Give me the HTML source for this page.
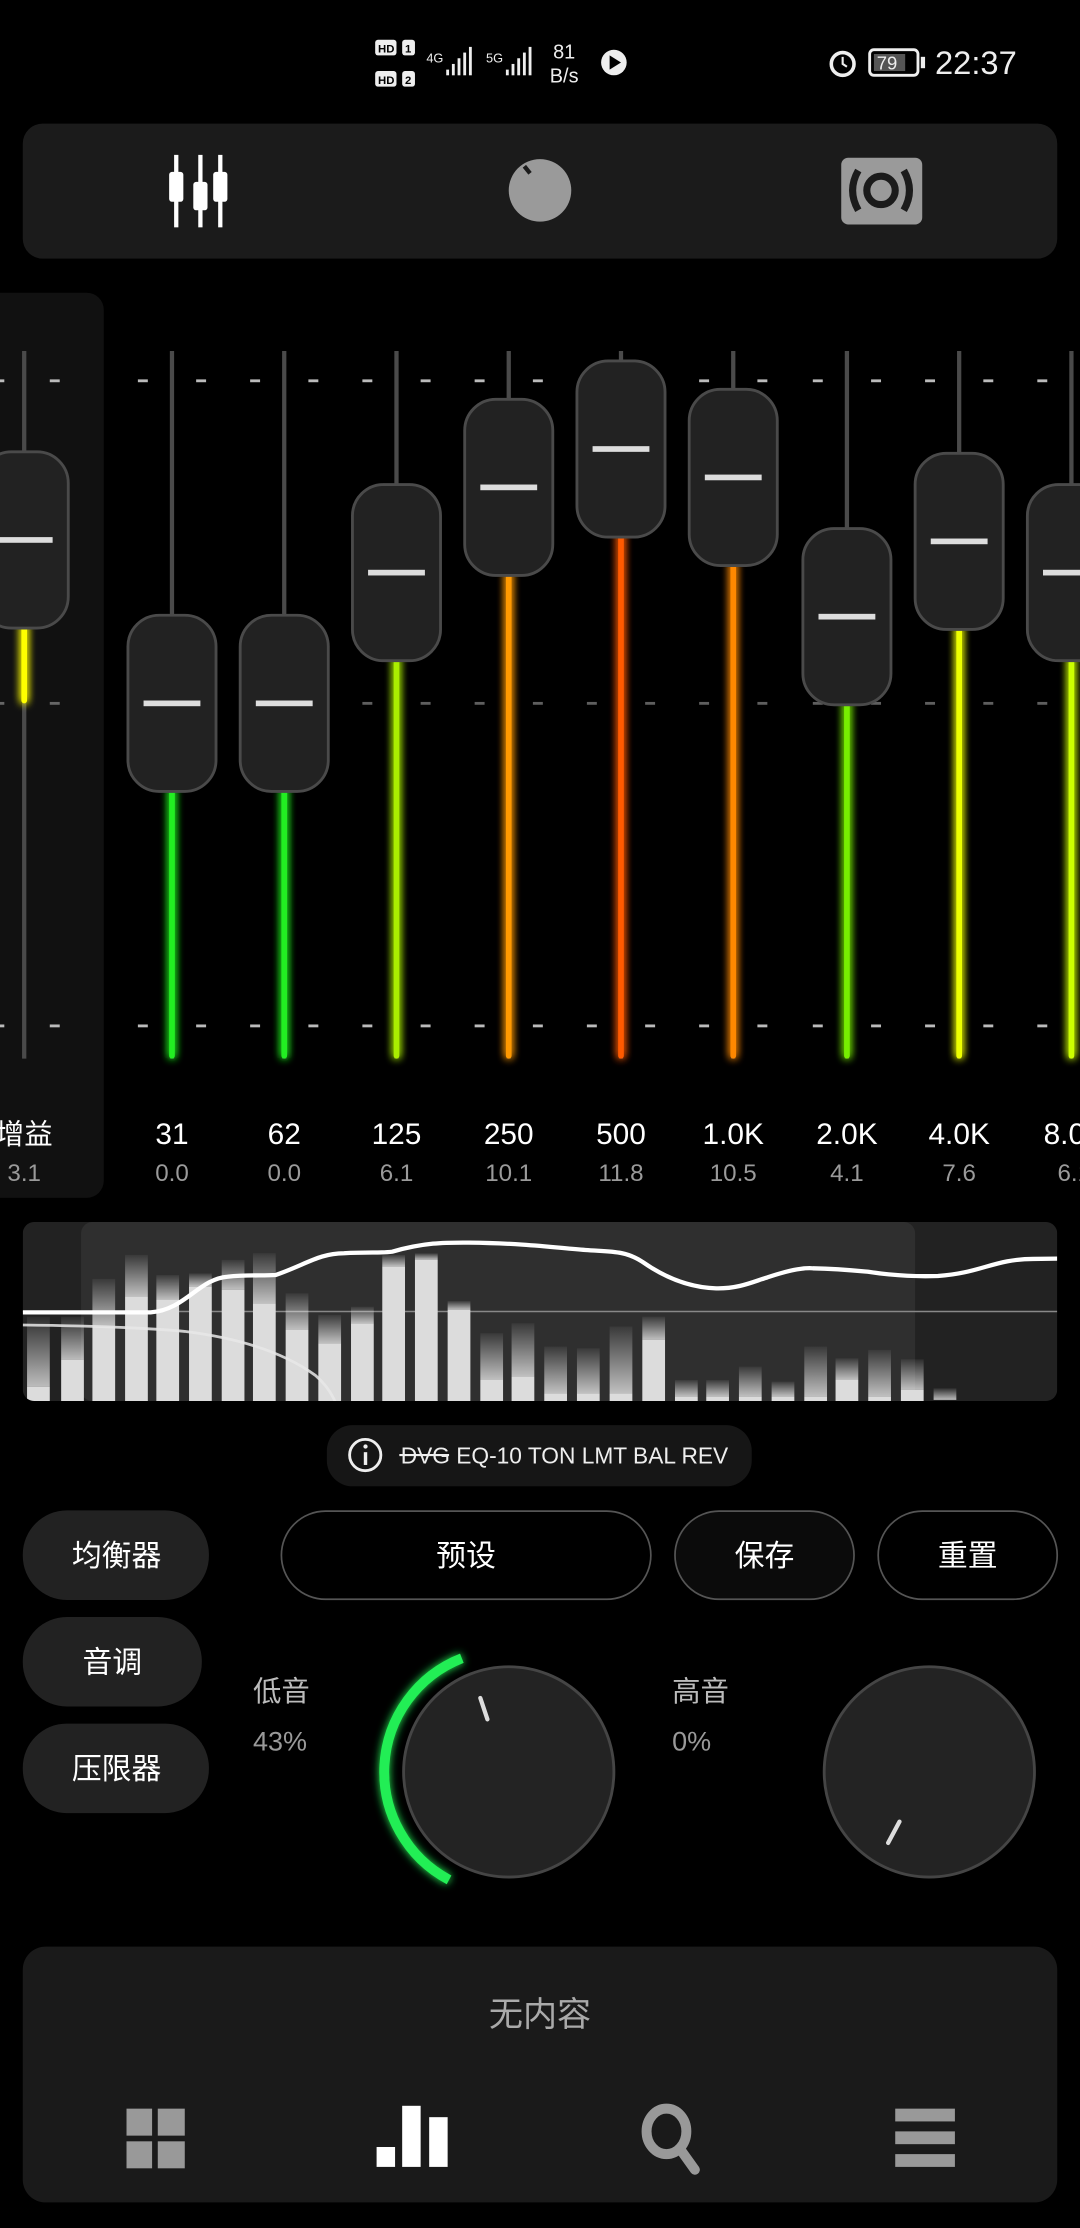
<!DOCTYPE html>
<html><head><meta charset="utf-8">
<style>
html,body{margin:0;padding:0;background:#000;width:1080px;height:2228px;overflow:hidden}
svg{display:block}
text{font-family:"Liberation Sans Narrow","Liberation Sans","Noto Sans CJK SC",sans-serif}
.cjk{font-family:"Liberation Sans","Noto Sans CJK SC",sans-serif}
</style></head><body>
<svg width="1080" height="2228" viewBox="0 0 760 1568" xmlns="http://www.w3.org/2000/svg">
<defs>
<filter id="glow" x="-200%" y="-10%" width="500%" height="120%"><feGaussianBlur stdDeviation="3" result="b"/><feMerge><feMergeNode in="b"/><feMergeNode in="b"/><feMergeNode in="SourceGraphic"/></feMerge></filter>
<filter id="glow2" x="-50%" y="-50%" width="200%" height="200%"><feGaussianBlur stdDeviation="3" result="b"/><feMerge><feMergeNode in="b"/><feMergeNode in="SourceGraphic"/></feMerge></filter>
<linearGradient id="fade" x1="0" y1="0" x2="0" y2="1"><stop offset="0" stop-color="#fff" stop-opacity="0.05"/><stop offset="1" stop-color="#fff" stop-opacity="0.7"/></linearGradient>
<clipPath id="spec"><rect x="16" y="860" width="728" height="126" rx="8"/></clipPath>
</defs>
<rect width="760" height="1568" fill="#000"/>

<!-- status bar -->
<g fill="#eee">
<rect x="264" y="28" width="15" height="11" rx="2"/><rect x="283" y="28" width="9" height="11" rx="2"/>
<rect x="264" y="50" width="15" height="11" rx="2"/><rect x="283" y="50" width="9" height="11" rx="2"/>
<text x="266" y="37" font-size="8" fill="#000" font-weight="bold">HD</text><text x="285" y="37" font-size="8" fill="#000" font-weight="bold">1</text>
<text x="266" y="59" font-size="8" fill="#000" font-weight="bold">HD</text><text x="285" y="59" font-size="8" fill="#000" font-weight="bold">2</text>
<text x="300" y="44" font-size="9">4G</text>
<rect x="314" y="49" width="2" height="4"/><rect x="318" y="45" width="2" height="8"/><rect x="322" y="41" width="2" height="12"/><rect x="326" y="37" width="2" height="16"/><rect x="330" y="33" width="2" height="20"/>
<text x="342" y="44" font-size="9">5G</text>
<rect x="356" y="49" width="2" height="4"/><rect x="360" y="45" width="2" height="8"/><rect x="364" y="41" width="2" height="12"/><rect x="368" y="37" width="2" height="16"/><rect x="372" y="33" width="2" height="20"/>
<text x="397" y="41" font-size="14" text-anchor="middle">81</text>
<text x="397" y="58" font-size="14" text-anchor="middle">B/s</text>
<circle cx="432" cy="44" r="9"/><path d="M429 39 L437 44 L429 49Z" fill="#000"/>
<circle cx="593" cy="45" r="8" fill="none" stroke="#eee" stroke-width="2.5"/><path d="M593 40 V45 L596 47" stroke="#eee" stroke-width="1.5" fill="none"/>
<rect x="612" y="35" width="34" height="18" rx="3" fill="none" stroke="#eee" stroke-width="2"/><rect x="615" y="38" width="22" height="12" fill="#555"/><rect x="648" y="40" width="3" height="8"/>
<text x="617" y="49" font-size="13">79</text>
<text x="658" y="52" font-size="23">22:37</text>
</g>

<!-- top tabs -->
<rect x="16" y="87" width="728" height="95" rx="14" fill="#1b1b1b"/>
<g fill="#fff">
<rect x="122.5" y="109" width="3" height="51"/><rect x="139.5" y="109" width="3" height="51"/><rect x="153.5" y="109" width="3" height="51"/>
<rect x="119" y="121" width="10" height="21" rx="2"/><rect x="136" y="128" width="10" height="20" rx="2"/><rect x="150" y="121" width="10" height="21" rx="2"/>
</g>
<ellipse cx="380" cy="134" rx="22" ry="22" fill="#9a9a9a"/>
<path d="M369 117 L373 122" stroke="#1b1b1b" stroke-width="3"/>
<rect x="592" y="111" width="57" height="47" rx="5" fill="#9a9a9a"/>
<circle cx="620" cy="134" r="10" fill="none" stroke="#1b1b1b" stroke-width="5"/>
<path d="M604 120 Q596 134 604 148 M636 120 Q644 134 636 148" stroke="#1b1b1b" stroke-width="5" fill="none"/>

<!-- gain panel -->
<rect x="-20" y="206" width="93" height="637" rx="12" fill="#111"/>

<!-- dashes -->
<g fill="#bbb">
<g id="dr">
<rect x="-4" y="267" width="7" height="2"/><rect x="35" y="267" width="7" height="2"/>
<rect x="97" y="267" width="7" height="2"/><rect x="138" y="267" width="7" height="2"/><rect x="176" y="267" width="7" height="2"/><rect x="217" y="267" width="7" height="2"/>
<rect x="255" y="267" width="7" height="2"/><rect x="296" y="267" width="7" height="2"/><rect x="334" y="267" width="7" height="2"/><rect x="375" y="267" width="7" height="2"/>
<rect x="413" y="267" width="7" height="2"/><rect x="454" y="267" width="7" height="2"/><rect x="492" y="267" width="7" height="2"/><rect x="533" y="267" width="7" height="2"/>
<rect x="572" y="267" width="7" height="2"/><rect x="613" y="267" width="7" height="2"/><rect x="651" y="267" width="7" height="2"/><rect x="692" y="267" width="7" height="2"/>
<rect x="730" y="267" width="7" height="2"/>
</g>
<use href="#dr" y="227" opacity="0.5"/>
<use href="#dr" y="454"/>
</g>

<!-- sliders -->
<g stroke="#4a4a4a" stroke-width="3">
<line x1="17" y1="247" x2="17" y2="745"/><line x1="121" y1="247" x2="121" y2="745"/><line x1="200" y1="247" x2="200" y2="745"/><line x1="279" y1="247" x2="279" y2="745"/><line x1="358" y1="247" x2="358" y2="745"/><line x1="437" y1="247" x2="437" y2="745"/><line x1="516" y1="247" x2="516" y2="745"/><line x1="596" y1="247" x2="596" y2="745"/><line x1="675" y1="247" x2="675" y2="745"/><line x1="754" y1="247" x2="754" y2="745"/>
</g>
<g stroke-width="4" stroke-linecap="round" filter="url(#glow)">
<line x1="17" y1="440" x2="17" y2="493" stroke="#ffff00"/>
<line x1="121" y1="555" x2="121" y2="743" stroke="#22ee22"/>
<line x1="200" y1="555" x2="200" y2="743" stroke="#22ee22"/>
<line x1="279" y1="463" x2="279" y2="743" stroke="#aaee00"/>
<line x1="358" y1="403" x2="358" y2="743" stroke="#ff9900"/>
<line x1="437" y1="376" x2="437" y2="743" stroke="#ff5a00"/>
<line x1="516" y1="396" x2="516" y2="743" stroke="#ff8800"/>
<line x1="596" y1="494" x2="596" y2="743" stroke="#77ee00"/>
<line x1="675" y1="441" x2="675" y2="743" stroke="#eeff00"/>
<line x1="754" y1="463" x2="754" y2="743" stroke="#ccff00"/>
</g>
<g fill="#222" stroke="#4a4a4a" stroke-width="2">
<rect x="-14" y="318" width="62" height="124" rx="22"/>
<rect x="90" y="433" width="62" height="124" rx="22"/>
<rect x="169" y="433" width="62" height="124" rx="22"/>
<rect x="248" y="341" width="62" height="124" rx="22"/>
<rect x="327" y="281" width="62" height="124" rx="22"/>
<rect x="406" y="254" width="62" height="124" rx="22"/>
<rect x="485" y="274" width="62" height="124" rx="22"/>
<rect x="565" y="372" width="62" height="124" rx="22"/>
<rect x="644" y="319" width="62" height="124" rx="22"/>
<rect x="723" y="341" width="62" height="124" rx="22"/>
</g>
<g fill="#ddd">
<rect x="-3" y="378" width="40" height="4"/><rect x="101" y="493" width="40" height="4"/><rect x="180" y="493" width="40" height="4"/><rect x="259" y="401" width="40" height="4"/><rect x="338" y="341" width="40" height="4"/><rect x="417" y="314" width="40" height="4"/><rect x="496" y="334" width="40" height="4"/><rect x="576" y="432" width="40" height="4"/><rect x="655" y="379" width="40" height="4"/><rect x="734" y="401" width="40" height="4"/>
</g>

<!-- labels -->
<g font-size="21" fill="#fff" text-anchor="middle">
<text x="17" y="805" class="cjk" font-size="20">增益</text>
<text x="121" y="805">31</text><text x="200" y="805">62</text><text x="279" y="805">125</text><text x="358" y="805">250</text><text x="437" y="805">500</text><text x="516" y="805">1.0K</text><text x="596" y="805">2.0K</text><text x="675" y="805">4.0K</text><text x="756" y="805">8.0K</text>
</g>
<g font-size="17" fill="#9a9a9a" text-anchor="middle">
<text x="17" y="831">3.1</text>
<text x="121" y="831">0.0</text><text x="200" y="831">0.0</text><text x="279" y="831">6.1</text><text x="358" y="831">10.1</text><text x="437" y="831">11.8</text><text x="516" y="831">10.5</text><text x="596" y="831">4.1</text><text x="675" y="831">7.6</text><text x="756" y="831">6.1</text>
</g>

<!-- spectrum -->
<g clip-path="url(#spec)">
<rect x="16" y="860" width="728" height="126" fill="#222"/>
<rect x="57" y="860" width="587" height="126" rx="8" fill="#2f2f2f"/>
<line x1="16" y1="923" x2="744" y2="923" stroke="#888" stroke-width="1"/>
<g fill="url(#fade)">
<rect x="19" y="926.6" width="16" height="49.3"/><rect x="43" y="926.6" width="16" height="30.5"/><rect x="65" y="900.1" width="16" height="33.5"/><rect x="88" y="883.2" width="16" height="29.3"/><rect x="110" y="897.3" width="16" height="17.6"/><rect x="133" y="896.1" width="16" height="9.4"/><rect x="156" y="886.7" width="16" height="21.1"/><rect x="178" y="882" width="16" height="35.2"/><rect x="201" y="910.2" width="16" height="25.8"/><rect x="224" y="925.4" width="16" height="20"/><rect x="247" y="919.6" width="16" height="11.7"/><rect x="269" y="883.2" width="16" height="8.2"/><rect x="292" y="882" width="16" height="4.7"/><rect x="315" y="915.6" width="16" height="6.3"/><rect x="338" y="938.3" width="16" height="32.9"/><rect x="360" y="931.3" width="16" height="37.5"/><rect x="383" y="947.7" width="16" height="32.9"/><rect x="406" y="948.9" width="16" height="31.7"/><rect x="429" y="933.6" width="16" height="47"/><rect x="452" y="926.6" width="16" height="16.4"/><rect x="475" y="971.2" width="16" height="11.7"/><rect x="497" y="971.2" width="16" height="11.7"/><rect x="520" y="961.8" width="16" height="21.1"/><rect x="543" y="972.3" width="16" height="10.6"/><rect x="566" y="947.7" width="16" height="35.2"/><rect x="588" y="955.9" width="16" height="15.3"/><rect x="611" y="950" width="16" height="32.9"/><rect x="634" y="956.6" width="16" height="21.6"/><rect x="657" y="977" width="16" height="8.2"/>
</g>
<g fill="#dcdcdc">
<rect x="19" y="975.9" width="16" height="11"/><rect x="43" y="957.1" width="16" height="30"/><rect x="65" y="933.6" width="16" height="53"/><rect x="88" y="912.5" width="16" height="74"/><rect x="110" y="914.9" width="16" height="72"/><rect x="133" y="905.5" width="16" height="81"/><rect x="156" y="907.8" width="16" height="79"/><rect x="178" y="917.2" width="16" height="70"/><rect x="201" y="936" width="16" height="51"/><rect x="224" y="945.4" width="16" height="41"/><rect x="247" y="931.3" width="16" height="56"/><rect x="269" y="891.4" width="16" height="96"/><rect x="292" y="886.7" width="16" height="100"/><rect x="315" y="921.9" width="16" height="65"/><rect x="338" y="971.2" width="16" height="16"/><rect x="360" y="968.8" width="16" height="18"/><rect x="383" y="980.6" width="16" height="6"/><rect x="406" y="980.6" width="16" height="6"/><rect x="429" y="980.6" width="16" height="6"/><rect x="452" y="943" width="16" height="44"/><rect x="475" y="982.9" width="16" height="4"/><rect x="497" y="982.9" width="16" height="4"/><rect x="520" y="982.9" width="16" height="4"/><rect x="543" y="982.9" width="16" height="4"/><rect x="566" y="982.9" width="16" height="4"/><rect x="588" y="971.2" width="16" height="16"/><rect x="611" y="982.9" width="16" height="4"/><rect x="634" y="978.2" width="16" height="9"/>
</g>
<path d="M16 932.5 C60 933 97 934 130 937 C170 942 200 952 222 968 C230 975 234 982 236 987" stroke="#e8e8e8" stroke-width="2" fill="none" opacity="0.85"/>
<path d="M16 923.6 L106 923.6 C130 922 140 900 160 898.5 C175 897 185 898 194 897.3 C215 890 225 882 242 882 C260 881 268 882 276 880.9 C300 874 315 874.5 330 874.5 C370 875 390 878 412 879.7 C430 881 440 880 452 888 C462 895 480 906 504 906.7 C520 907 530 902 540 899 C555 894 565 892 572 892.6 C590 893 600 894 611 895 C630 898 645 898.5 660 898 C690 896 700 886 727 886 L744 885.8" stroke="#fff" stroke-width="3" fill="none"/>
</g>

<!-- info pill -->
<rect x="230" y="1003" width="299" height="43" rx="18" fill="#161616"/>
<circle cx="257" cy="1024" r="11" fill="none" stroke="#eee" stroke-width="2"/>
<rect x="256" y="1022" width="2.4" height="9" fill="#eee"/><circle cx="257.2" cy="1018" r="1.5" fill="#eee"/>
<text x="282" y="1030" font-size="16" fill="#eee">DVG EQ-10 TON LMT BAL REV</text>
<line x1="281" y1="1024" x2="316" y2="1024" stroke="#eee" stroke-width="1.5"/>

<!-- buttons -->
<g class="cjk" font-size="21" fill="#fff" text-anchor="middle">
<rect x="16" y="1063" width="131" height="63" rx="31" fill="#222"/>
<rect x="16" y="1138" width="126" height="63" rx="31" fill="#222"/>
<rect x="16" y="1213" width="131" height="63" rx="31" fill="#222"/>
<rect x="198" y="1063.5" width="260" height="62" rx="31" fill="#000" stroke="#555" stroke-width="1.2"/>
<rect x="475" y="1063.5" width="126" height="62" rx="31" fill="#0b0b0b" stroke="#555" stroke-width="1.2"/>
<rect x="618" y="1063.5" width="126" height="62" rx="31" fill="#000" stroke="#555" stroke-width="1.2"/>
<text x="82" y="1102" class="cjk">均衡器</text>
<text x="79" y="1177" class="cjk">音调</text>
<text x="82" y="1252" class="cjk">压限器</text>
<text x="328" y="1102" class="cjk">预设</text>
<text x="538" y="1102" class="cjk">保存</text>
<text x="681" y="1102" class="cjk">重置</text>
</g>

<!-- tone knobs -->
<g class="cjk" font-size="20" fill="#bbb">
<text x="178" y="1197" class="cjk">低音</text>
<text x="473" y="1197" class="cjk">高音</text>
</g>
<text x="178" y="1232" font-size="19" fill="#999">43%</text>
<text x="473" y="1232" font-size="19" fill="#999">0%</text>
<path d="M325 1167 A86 86 0 0 0 316 1323" stroke="#22ee55" stroke-width="7" fill="none" filter="url(#glow2)"/>
<circle cx="358" cy="1247" r="74" fill="#232323" stroke="#454545" stroke-width="2"/>
<line x1="338" y1="1195" x2="343" y2="1210" stroke="#ddd" stroke-width="3" stroke-linecap="round"/>
<circle cx="654" cy="1247" r="74" fill="#232323" stroke="#454545" stroke-width="2"/>
<line x1="625" y1="1297" x2="633" y2="1282" stroke="#ddd" stroke-width="3" stroke-linecap="round"/>

<!-- bottom card -->
<rect x="16" y="1370" width="728" height="180" rx="16" fill="#1a1a1a"/>
<text x="380" y="1426" class="cjk" font-size="24" fill="#aaa" text-anchor="middle">无内容</text>
<g fill="#999">
<rect x="89" y="1484" width="18" height="19"/><rect x="111" y="1484" width="19" height="19"/><rect x="89" y="1507" width="18" height="19"/><rect x="111" y="1507" width="19" height="19"/>
<rect x="630" y="1484" width="42" height="9"/><rect x="630" y="1500" width="42" height="9"/><rect x="630" y="1516" width="42" height="9"/>
</g>
<g fill="#fff"><rect x="265" y="1511" width="13" height="14"/><rect x="283" y="1482" width="13" height="43"/><rect x="302" y="1490" width="13" height="35"/></g>
<ellipse cx="469" cy="1500" rx="14" ry="16" fill="none" stroke="#999" stroke-width="7"/>
<line x1="479" y1="1513" x2="489" y2="1527" stroke="#999" stroke-width="7" stroke-linecap="round"/>
</svg>
</body></html>
